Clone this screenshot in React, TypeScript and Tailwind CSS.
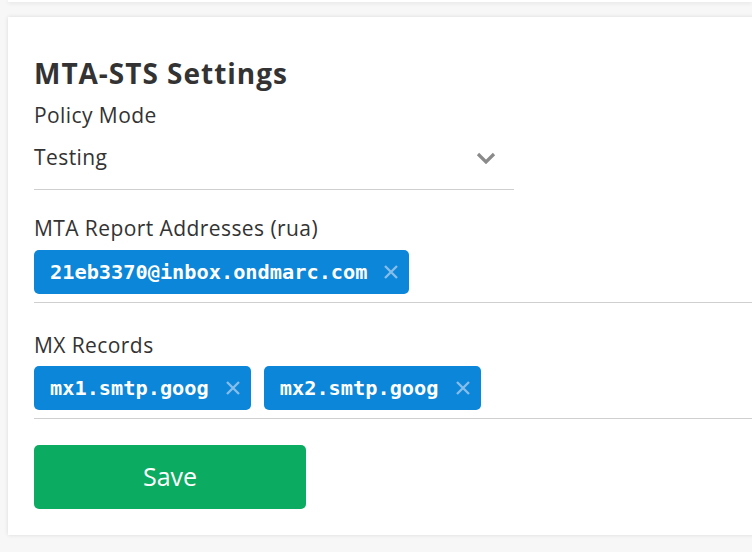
import React from "react";

const sans = "font-['Open_Sans','Lato',sans-serif]";
const mono = "font-['DejaVu_Sans_Mono','Liberation_Mono',monospace]";

const Chip: React.FC<{ label: string }> = ({ label }) => (
  <div className="flex h-[44px] items-center gap-[16px] rounded-[5px] bg-[#0b86d8] pl-[16px] pr-[10px]">
    <span className={`${mono} text-[20.3px] font-bold text-white`}>{label}</span>
    <svg width="16" height="16" viewBox="0 0 16 16" className="mb-[1px]">
      <path
        d="M2 2 L14 14 M14 2 L2 14"
        stroke="#86bde9"
        strokeWidth="2.4"
        strokeLinecap="butt"
      />
    </svg>
  </div>
);

const App: React.FC = () => {
  return (
    <div className={`${sans} h-[552px] w-[752px] overflow-hidden bg-[#f7f7f7] text-[#333]`}>
      <div className="ml-2 h-[2px] bg-white shadow-[0_1px_4px_rgba(0,0,0,0.12)]" />
      <div className="ml-2 mt-[15px] w-[780px] bg-white pl-[26px] pt-[40px] pb-[26px] shadow-[0_0_4px_rgba(0,0,0,0.12)]">
        <h2 className="text-[28px] font-bold leading-[32px] tracking-[0.035em]">MTA-STS Settings</h2>
        <div className="mt-[12px] text-[21px] leading-[28px] tracking-[0.02em]">Policy Mode</div>
        <div className="mt-[14px] flex h-[47px] w-[480px] items-start justify-between border-b border-[#cfcfcf] pr-[18px]">
          <span className="text-[21px] leading-[28px] tracking-[0.02em]">Testing</span>
          <svg width="20" height="12" viewBox="0 0 20 12" className="mt-[9px]">
            <path d="M2 2 L10 10 L18 2" fill="none" stroke="#8a8a8a" strokeWidth="3.2" />
          </svg>
        </div>
        <div className="mt-[24px] text-[21px] leading-[28px] tracking-[0.02em]">MTA Report Addresses (rua)</div>
        <div className="mt-[8px] flex gap-[13px] border-b border-[#cfcfcf] pb-[8px]">
          <Chip label="21eb3370@inbox.ondmarc.com" />
        </div>
        <div className="mt-[28px] text-[21px] leading-[28px] tracking-[0.02em]">MX Records</div>
        <div className="mt-[7px] flex gap-[13px] border-b border-[#cfcfcf] pb-[8px]">
          <Chip label="mx1.smtp.goog" />
          <Chip label="mx2.smtp.goog" />
        </div>
        <button className="mt-[26px] flex h-[64px] w-[272px] items-center justify-center rounded-[5px] bg-[#0bab61] text-[25px] font-medium text-white">
          Save
        </button>
      </div>
    </div>
  );
};

export default App;
